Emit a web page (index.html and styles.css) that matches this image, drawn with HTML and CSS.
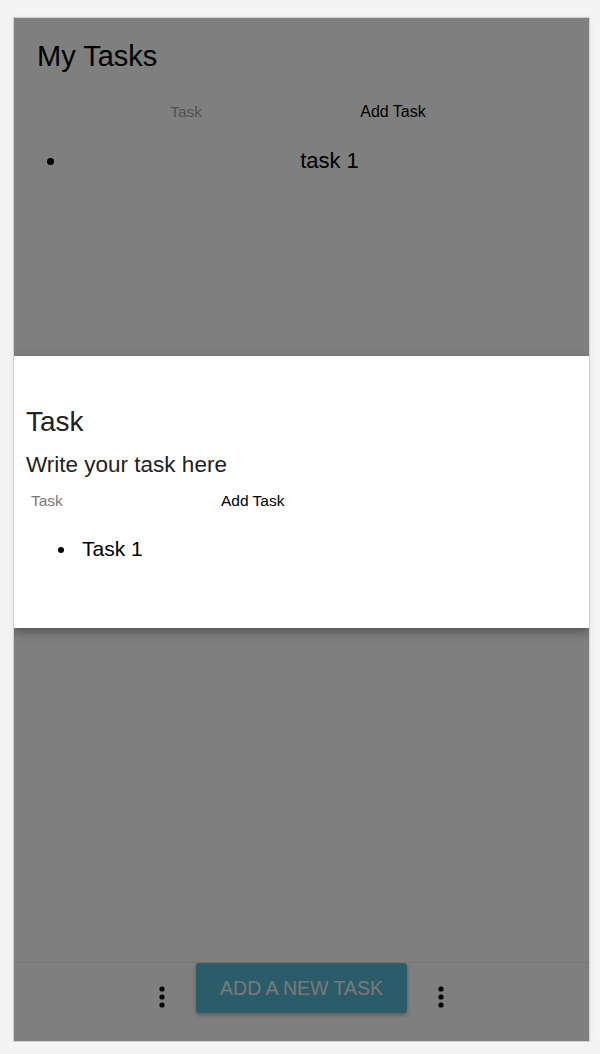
FILE: index.html
```html
<!DOCTYPE html>
<html lang="en">
<head>
<meta charset="utf-8">
<title>My Tasks</title>
<link rel="stylesheet" href="styles.css">
</head>
<body>
<div class="device">
  <div class="app">
    <h1 class="app-title">My Tasks</h1>
    <form class="task-form task-form--center">
      <input class="task-input task-input--main" type="text" placeholder="Task">
      <button class="task-add task-add--main" type="button">Add Task</button>
    </form>
    <ul class="task-list task-list--main">
      <li>task 1</li>
    </ul>
    <div class="spacer"></div>
    <footer class="app-footer">
      <span class="kebab">
        <svg width="6" height="22" viewBox="0 0 6 22"><circle cx="3" cy="3" r="2.6"/><circle cx="3" cy="11" r="2.6"/><circle cx="3" cy="19" r="2.6"/></svg>
      </span>
      <button class="new-task-btn" type="button">ADD A NEW TASK</button>
      <span class="kebab">
        <svg width="6" height="22" viewBox="0 0 6 22"><circle cx="3" cy="3" r="2.6"/><circle cx="3" cy="11" r="2.6"/><circle cx="3" cy="19" r="2.6"/></svg>
      </span>
    </footer>
  </div>
  <div class="backdrop"></div>
  <div class="modal">
    <h2 class="modal-title">Task</h2>
    <p class="modal-text">Write your task here</p>
    <form class="task-form">
      <input class="task-input task-input--modal" type="text" placeholder="Task">
      <button class="task-add" type="button">Add Task</button>
    </form>
    <ul class="task-list task-list--modal">
      <li>Task 1</li>
    </ul>
  </div>
</div>
</body>
</html>
```

FILE: styles.css
```css
html, body {
  margin: 0;
  padding: 0;
}
body {
  background: #f4f4f4;
  font-family: "Liberation Sans", Arial, Helvetica, sans-serif;
  color: #000;
  padding: 17px 0 0 13px;
}
.device {
  position: relative;
  box-sizing: border-box;
  width: 577px;
  height: 1025px;
  border: 1px solid #d0d0d0;
  background: #fff;
  overflow: hidden;
  box-shadow: 0 0 6px rgba(0, 0, 0, 0.06);
}
.app {
  display: flex;
  flex-direction: column;
  height: 100%;
}
.app-title {
  margin: 0;
  padding: 21px 23px 0;
  font-size: 29px;
  line-height: 35px;
  font-weight: 400;
}
.task-form {
  display: flex;
  align-items: center;
  height: 29px;
}
.task-form--center {
  justify-content: center;
  margin-top: 23px;
  padding-right: 6px;
}
.task-input {
  box-sizing: border-box;
  width: 189px;
  height: 29px;
  padding: 0 5px;
  border: none;
  background: transparent;
  font-family: inherit;
  font-size: 15.5px;
  outline: none;
}
.task-input--main::placeholder {
  color: #a4a4a4;
}
.task-input--modal::placeholder {
  color: #777;
}
.task-add {
  background: transparent;
  border: none;
  padding: 6px;
  font-family: inherit;
  font-size: 15.5px;
  line-height: 17px;
  color: #000;
}
.task-add--main {
  font-size: 16px;
}
.task-list {
  margin: 0;
  list-style: disc;
}
.task-list--main {
  margin-top: 22px;
  padding: 0 0 0 53px;
  font-size: 22px;
  line-height: 26px;
  text-align: center;
}
.task-list--main li {
  padding-left: 3px;
}
.task-list--modal {
  margin-top: 21px;
  padding-left: 51px;
  font-size: 21px;
  line-height: 25px;
}
.task-list--modal li {
  padding-left: 5px;
}
.spacer {
  flex: 1;
}
.app-footer {
  box-sizing: border-box;
  height: 79px;
  border-top: 1px solid #eee;
  display: flex;
  justify-content: center;
  align-items: flex-start;
  gap: 31px;
}
.kebab {
  display: flex;
  margin-top: 23px;
}
.kebab svg {
  fill: #000;
}
.new-task-btn {
  width: 211px;
  height: 50px;
  border: none;
  border-radius: 3px;
  background: #54bad2;
  color: #f2f2f2;
  font-family: inherit;
  font-size: 19.5px;
  padding: 0;
  box-shadow: 0 2px 4px rgba(0, 0, 0, 0.3);
}
.backdrop {
  position: absolute;
  inset: 0;
  background: rgba(0, 0, 0, 0.5);
}
.modal {
  position: absolute;
  left: 0;
  right: 0;
  top: 338px;
  height: 272px;
  box-sizing: border-box;
  padding: 49px 12px 0;
  background: #fff;
  color: #222;
  box-shadow: 0 4px 10px rgba(0, 0, 0, 0.35);
}
.modal-title {
  margin: 0;
  font-size: 28px;
  line-height: 34px;
  font-weight: 400;
}
.modal-text {
  margin: 12px 0 0;
  font-size: 22.5px;
  line-height: 28px;
}
.modal .task-form {
  margin-top: 7px;
}
.modal .task-list {
  color: #000;
}
```
